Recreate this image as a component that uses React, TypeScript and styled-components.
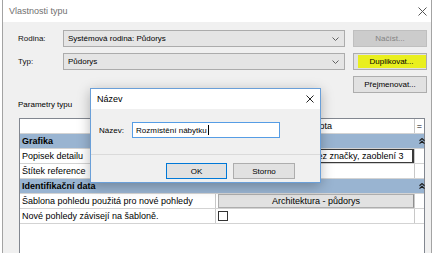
import React from "react";
import styled, { createGlobalStyle } from "styled-components";

const GlobalStyle = createGlobalStyle`
  html, body {
    margin: 0;
    padding: 0;
    background: #ffffff;
    overflow: hidden;
  }
  body {
    font-family: "Liberation Sans", Arial, sans-serif;
    color: #000;
  }
  * {
    box-sizing: border-box;
  }
`;

const Page = styled.div`
  position: relative;
  width: 436px;
  height: 253px;
  overflow: hidden;
  background: #ffffff;
`;

const Window = styled.div`
  margin-left: 2px;
  width: 430px;
  height: 270px;
  border-left: 1px solid #a3a3a3;
  border-right: 1px solid #a3a3a3;
  background: #f0f0f0;
  display: flex;
  flex-direction: column;
`;

const TitleBar = styled.div<{ $height: number; $pad: number }>`
  height: ${(p) => p.$height}px;
  flex: none;
  background: #ffffff;
  display: flex;
  align-items: center;
  justify-content: space-between;
  padding: 0 ${(p) => p.$pad}px 0 6px;
`;

const Title = styled.span<{ $muted?: boolean }>`
  font-size: 9px;
  color: ${(p) => (p.$muted ? "#707070" : "#000000")};
`;

const Body = styled.div`
  flex: 1;
  display: flex;
  flex-direction: column;
  padding: 8px 4px 0 15px;
`;

const FormGrid = styled.div`
  display: grid;
  grid-template-columns: 37px 282px 74px;
  grid-auto-rows: 17px;
  column-gap: 8px;
  row-gap: 6px;
`;

const FieldLabel = styled.span`
  font-size: 8px;
  display: flex;
  align-items: center;
  color: #111;
`;

const Combo = styled.div`
  display: flex;
  align-items: center;
  justify-content: space-between;
  background: #e5e5e5;
  border: 1px solid #acacac;
  padding: 0 5px 0 4px;
  font-size: 8px;
`;

const Button = styled.div<{ $disabled?: boolean; $default?: boolean; $col?: number }>`
  grid-column: ${(p) => p.$col ?? "auto"};
  display: flex;
  align-items: center;
  justify-content: center;
  font-size: 8px;
  height: 100%;
  background: ${(p) => (p.$disabled ? "#cccccc" : "#e1e1e1")};
  border: 1px solid ${(p) => (p.$disabled ? "#bfbfbf" : p.$default ? "#0078d7" : "#adadad")};
  color: ${(p) => (p.$disabled ? "#838383" : "#000000")};
`;

const Highlight = styled.span`
  background: #e9ef1e;
  padding: 2px 12px 2px 11px;
  margin-left: 4px;
`;

const SectionLabel = styled.div`
  margin-top: 7px;
  font-size: 8px;
  line-height: 10px;
`;

const Table = styled.div`
  margin: 8px 2px 0 1px;
  flex: 1;
  background: #ffffff;
  border: 1px solid #828790;
  border-bottom: none;
  display: flex;
  flex-direction: column;
`;

const Row = styled.div`
  display: grid;
  grid-template-columns: 196px 199px 9px;
  height: 15px;
  border-bottom: 1px solid #d3d3d3;
  font-size: 9px;
  line-height: 14px;
`;

const Cell = styled.div<{ $center?: boolean }>`
  border-right: 1px solid #c8c8c8;
  padding-left: ${(p) => (p.$center ? 0 : 2)}px;
  white-space: nowrap;
  overflow: hidden;
  display: flex;
  align-items: center;
  justify-content: ${(p) => (p.$center ? "center" : "flex-start")};
`;

const LastCell = styled.div`
  display: flex;
  align-items: center;
  justify-content: center;
  font-size: 9px;
`;

const Band = styled.div`
  display: grid;
  grid-template-columns: 395px 9px;
  height: 15px;
  background: #99b4d1;
  border-bottom: 1px solid #d3d3d3;
  font-size: 9px;
  font-weight: bold;
  line-height: 14px;
  padding-left: 2px;
`;

const EditBox = styled.div`
  height: 100%;
  width: 100%;
  border: 1px solid #3a3a3a;
  border-right-width: 2px;
  padding-left: 3px;
  white-space: nowrap;
  overflow: hidden;
  display: flex;
  align-items: center;
`;

const CellButton = styled.div`
  height: 100%;
  width: 100%;
  background: #e1e1e1;
  border: 1px solid #adadad;
  border-right-color: #8f8f8f;
  display: flex;
  align-items: center;
  justify-content: center;
`;

const Check = styled.span`
  width: 10px;
  height: 10px;
  background: #ffffff;
  border: 1px solid #333333;
`;

/* the "Název" window floats over the type properties window */
const Dialog = styled.div`
  position: absolute;
  left: 90px;
  top: 88px;
  width: 231px;
  height: 95px;
  border: 1px solid #6a9fd8;
  background: #f0f0f0;
  box-shadow: 0 3px 12px rgba(0, 0, 0, 0.28);
  display: flex;
  flex-direction: column;
`;

const InputRow = styled.div`
  height: 45px;
  padding: 13px 0 0 8px;
  display: flex;
  align-items: flex-start;
`;

const InputLabel = styled.span`
  width: 33px;
  height: 16px;
  font-size: 8px;
  display: flex;
  align-items: center;
`;

const TextInput = styled.div`
  width: 148px;
  height: 16px;
  background: #ffffff;
  border: 1px solid #569de5;
  font-size: 8px;
  padding-left: 3px;
  display: flex;
  align-items: center;
`;

const Caret = styled.span`
  width: 1px;
  height: 10px;
  background: #000000;
  margin-left: 1px;
`;

const Footer = styled.div`
  flex: 1;
  border-top: 1px solid #dadada;
  display: flex;
  justify-content: flex-end;
  align-items: flex-start;
  gap: 6px;
  padding: 8px 25px 0 0;
`;

const FooterButton = styled(Button)<{ $w: number }>`
  width: ${(p) => p.$w}px;
  height: 16px;
`;

const CloseIcon = ({ size, color }: { size: number; color: string }) => (
  <svg width={size} height={size} viewBox={`0 0 ${size} ${size}`}>
    <path d={`M0.5 0.5 L${size - 0.5} ${size - 0.5} M${size - 0.5} 0.5 L0.5 ${size - 0.5}`} stroke={color} strokeWidth="1" fill="none" />
  </svg>
);

const Chevron = () => (
  <svg width="7" height="4" viewBox="0 0 7 4">
    <polyline points="0.5,0.5 3.5,3.5 6.5,0.5" stroke="#606060" strokeWidth="1" fill="none" />
  </svg>
);

const CollapseIcon = () => (
  <svg width="6" height="6" viewBox="0 0 6 6">
    <polyline points="0.5,2.8 3,0.6 5.5,2.8" stroke="#1e1e1e" strokeWidth="1.2" fill="none" />
    <polyline points="0.5,5.6 3,3.4 5.5,5.6" stroke="#1e1e1e" strokeWidth="1.2" fill="none" />
  </svg>
);

export default function App() {
  return (
    <Page>
      <GlobalStyle />
      <Window>
        <TitleBar $height={22} $pad={4}>
          <Title $muted>Vlastnosti typu</Title>
          <CloseIcon size={9} color="#555555" />
        </TitleBar>
        <Body>
          <FormGrid>
            <FieldLabel>Rodina:</FieldLabel>
            <Combo>
              <span>Systémová rodina: Půdorys</span>
              <Chevron />
            </Combo>
            <Button $disabled>Načíst...</Button>
            <FieldLabel>Typ:</FieldLabel>
            <Combo>
              <span>Půdorys</span>
              <Chevron />
            </Combo>
            <Button>
              <Highlight>Duplikovat...</Highlight>
            </Button>
            <Button $col={3}>Přejmenovat...</Button>
          </FormGrid>
          <SectionLabel>Parametry typu</SectionLabel>
          <Table>
            <Row>
              <Cell $center />
              <Cell $center>Hodnota</Cell>
              <LastCell>=</LastCell>
            </Row>
            <Band>
              <span>Grafika</span>
              <LastCell>
                <CollapseIcon />
              </LastCell>
            </Band>
            <Row>
              <Cell>Popisek detailu</Cell>
              <Cell>
                <EditBox>Hlava popisku detailu, bez značky, zaoblení 3</EditBox>
              </Cell>
              <LastCell />
            </Row>
            <Row>
              <Cell>Štítek reference</Cell>
              <Cell />
              <LastCell />
            </Row>
            <Band>
              <span>Identifikační data</span>
              <LastCell>
                <CollapseIcon />
              </LastCell>
            </Band>
            <Row>
              <Cell>Šablona pohledu použitá pro nové pohledy</Cell>
              <Cell>
                <CellButton>Architektura - půdorys</CellButton>
              </Cell>
              <LastCell />
            </Row>
            <Row>
              <Cell>Nové pohledy závisejí na šabloně.</Cell>
              <Cell>
                <Check />
              </Cell>
              <LastCell />
            </Row>
          </Table>
        </Body>
      </Window>

      <Dialog>
        <TitleBar $height={20} $pad={6}>
          <Title>Název</Title>
          <CloseIcon size={8} color="#222222" />
        </TitleBar>
        <InputRow>
          <InputLabel>Název:</InputLabel>
          <TextInput>
            Rozmístění nábytku
            <Caret />
          </TextInput>
        </InputRow>
        <Footer>
          <FooterButton $w={61} $default>
            OK
          </FooterButton>
          <FooterButton $w={62}>Storno</FooterButton>
        </Footer>
      </Dialog>
    </Page>
  );
}
